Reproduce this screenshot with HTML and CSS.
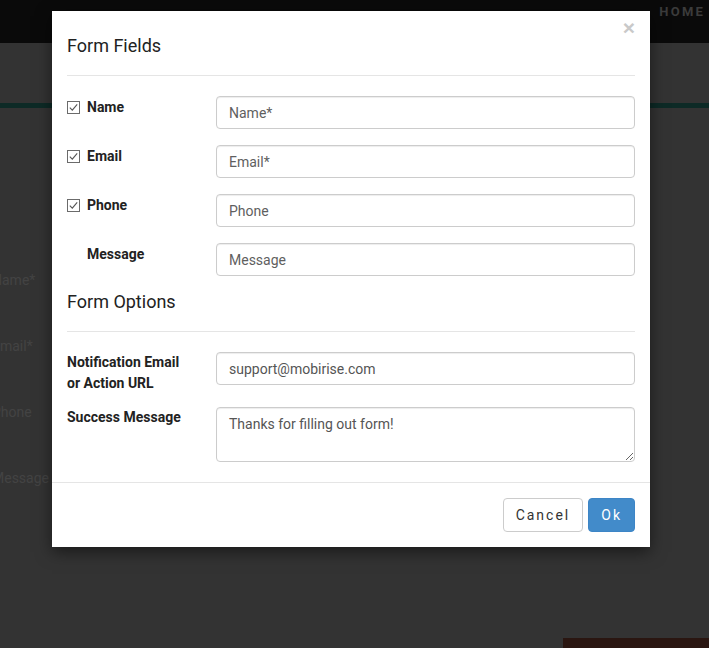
FILE: index.html
```html
<!DOCTYPE html>
<html>
<head>
    <meta charset="utf-8">
    <title>Form Fields</title>
    <link rel="stylesheet" href="styles.css">
</head>
<body>
    <div class="page">
        <div class="topbar">
            <span class="topnav">HOME</span>
        </div>
        <div class="stripe"></div>
        <div class="bgform">
            <div class="bgfield">Name*</div>
            <div class="bgfield">Email*</div>
            <div class="bgfield">Phone</div>
            <div class="bgfield">Message</div>
        </div>
        <div class="bgbutton"></div>
    </div>

    <div class="modal">
        <a href="#" class="close">&times;</a>
        <div class="modal_body">
            <h4 class="sec_title">Form Fields</h4>
            <hr class="sec_line">

            <div class="frow">
                <label class="flabel"><span class="chk"><svg width="13" height="13" viewBox="0 0 13 13"><rect x="0.5" y="0.5" width="12" height="12" fill="#fff" stroke="#6b6b6b"/><path d="M2.8 6.6 L5.3 9.2 L10.2 3.4" fill="none" stroke="#555" stroke-width="1.1"/></svg></span>Name</label>
                <input type="text" class="ftext" placeholder="Name*">
            </div>
            <div class="frow">
                <label class="flabel"><span class="chk"><svg width="13" height="13" viewBox="0 0 13 13"><rect x="0.5" y="0.5" width="12" height="12" fill="#fff" stroke="#6b6b6b"/><path d="M2.8 6.6 L5.3 9.2 L10.2 3.4" fill="none" stroke="#555" stroke-width="1.1"/></svg></span>Email</label>
                <input type="text" class="ftext" placeholder="Email*">
            </div>
            <div class="frow">
                <label class="flabel"><span class="chk"><svg width="13" height="13" viewBox="0 0 13 13"><rect x="0.5" y="0.5" width="12" height="12" fill="#fff" stroke="#6b6b6b"/><path d="M2.8 6.6 L5.3 9.2 L10.2 3.4" fill="none" stroke="#555" stroke-width="1.1"/></svg></span>Phone</label>
                <input type="text" class="ftext" placeholder="Phone">
            </div>
            <div class="frow lastf">
                <label class="flabel"><span class="chk nochk"></span>Message</label>
                <input type="text" class="ftext" placeholder="Message">
            </div>

            <h4 class="sec_title">Form Options</h4>
            <hr class="sec_line">

            <div class="frow orow">
                <label class="flabel olabel">Notification Email<br>or Action URL</label>
                <input type="text" class="ftext" value="support@mobirise.com">
            </div>
            <div class="frow orow last">
                <label class="flabel olabel">Success Message</label>
                <textarea class="ftext farea">Thanks for filling out form!</textarea>
            </div>
        </div>
        <div class="modal_footer">
            <a href="#" role="button" class="mbtn">Cancel</a>
            <a href="#" role="button" class="mbtn okbtn">Ok</a>
        </div>
    </div>
</body>
</html>
```

FILE: styles.css
```css
* {
    padding: 0px;
    margin: 0px;
    box-sizing: border-box;
    text-decoration: none;
}
body {
    background-color: #333333;
    font-family: Roboto, "Liberation Sans", sans-serif;
    font-size: 14px;
    overflow: hidden;
}
.page {
    position: relative;
    height: 648px;
}
.topbar {
    height: 43px;
    background-color: #0a0a0a;
    display: flex;
    justify-content: flex-end;
    padding: 5px 4px 0 0;
}
.topnav {
    color: #3b3b3b;
    font-weight: bold;
    font-size: 13px;
    letter-spacing: 2.2px;
    line-height: 14px;
}
.stripe {
    height: 5px;
    margin-top: 60px;
    background-color: #0d2a26;
}
.bgform {
    margin: 162px 0 0 -8px;
    display: flex;
    flex-direction: column;
    gap: 46px;
}
.bgfield {
    color: #434343;
    font-size: 14px;
    line-height: 20px;
}
.bgbutton {
    position: absolute;
    right: 0px;
    bottom: 0px;
    width: 146px;
    height: 10px;
    background-color: #2a1611;
}
.modal {
    position: absolute;
    left: 52px;
    top: 11px;
    width: 598px;
    background-color: #fff;
    box-shadow: 0 5px 15px rgba(0, 0, 0, 0.5);
}
.close {
    position: absolute;
    top: 6px;
    right: 15px;
    font-family: "Liberation Sans", Arial, sans-serif;
    font-size: 21px;
    font-weight: bold;
    line-height: 21px;
    color: #c9c9c9;
}
.modal_body {
    padding: 22px 15px 20px 15px;
}
.sec_title {
    font-size: 18px;
    font-weight: normal;
    line-height: 26px;
    color: #222;
}
.sec_line {
    border: 0;
    border-top: 1px solid #e5e5e5;
    margin: 16px 0 20px 0;
}
.frow {
    display: flex;
    margin-bottom: 16px;
}
.lastf {
    margin-bottom: 13px;
}
.orow {
    margin-bottom: 13px;
}
.last {
    margin-bottom: 0px;
}
.flabel {
    width: 149px;
    flex: none;
    display: flex;
    align-items: flex-start;
    font-weight: bold;
    color: #222;
    line-height: 20px;
    padding-top: 1px;
}
.olabel {
    display: block;
    line-height: 21px;
    padding-top: 0px;
}
.chk {
    width: 13px;
    height: 13px;
    margin: 4px 7px 0 0;
    display: block;
}
.chk svg {
    display: block;
}
.nochk {
    visibility: hidden;
}
.ftext {
    width: 419px;
    height: 33px;
    border: 1px solid #cccccc;
    border-radius: 4px;
    padding: 6px 12px;
    font-family: Roboto, "Liberation Sans", sans-serif;
    font-size: 14px;
    line-height: 20px;
    color: #555;
    background-color: #fff;
    box-shadow: inset 0 1px 1px rgba(0, 0, 0, 0.075);
    outline: none;
}
.ftext::placeholder {
    color: #5f5f5f;
    opacity: 1;
}
.farea {
    height: 55px;
    resize: vertical;
    overflow: hidden;
}
.modal_footer {
    border-top: 1px solid #e5e5e5;
    padding: 15px;
    display: flex;
    justify-content: flex-end;
    gap: 5px;
}
.mbtn {
    display: inline-block;
    padding: 6px 12px;
    font-size: 14px;
    line-height: 20px;
    letter-spacing: 2px;
    color: #333;
    background-color: #fff;
    border: 1px solid #cccccc;
    border-radius: 4px;
}
.okbtn {
    color: #fff;
    background-color: #428bca;
    border-color: #3d85c6;
}
```
